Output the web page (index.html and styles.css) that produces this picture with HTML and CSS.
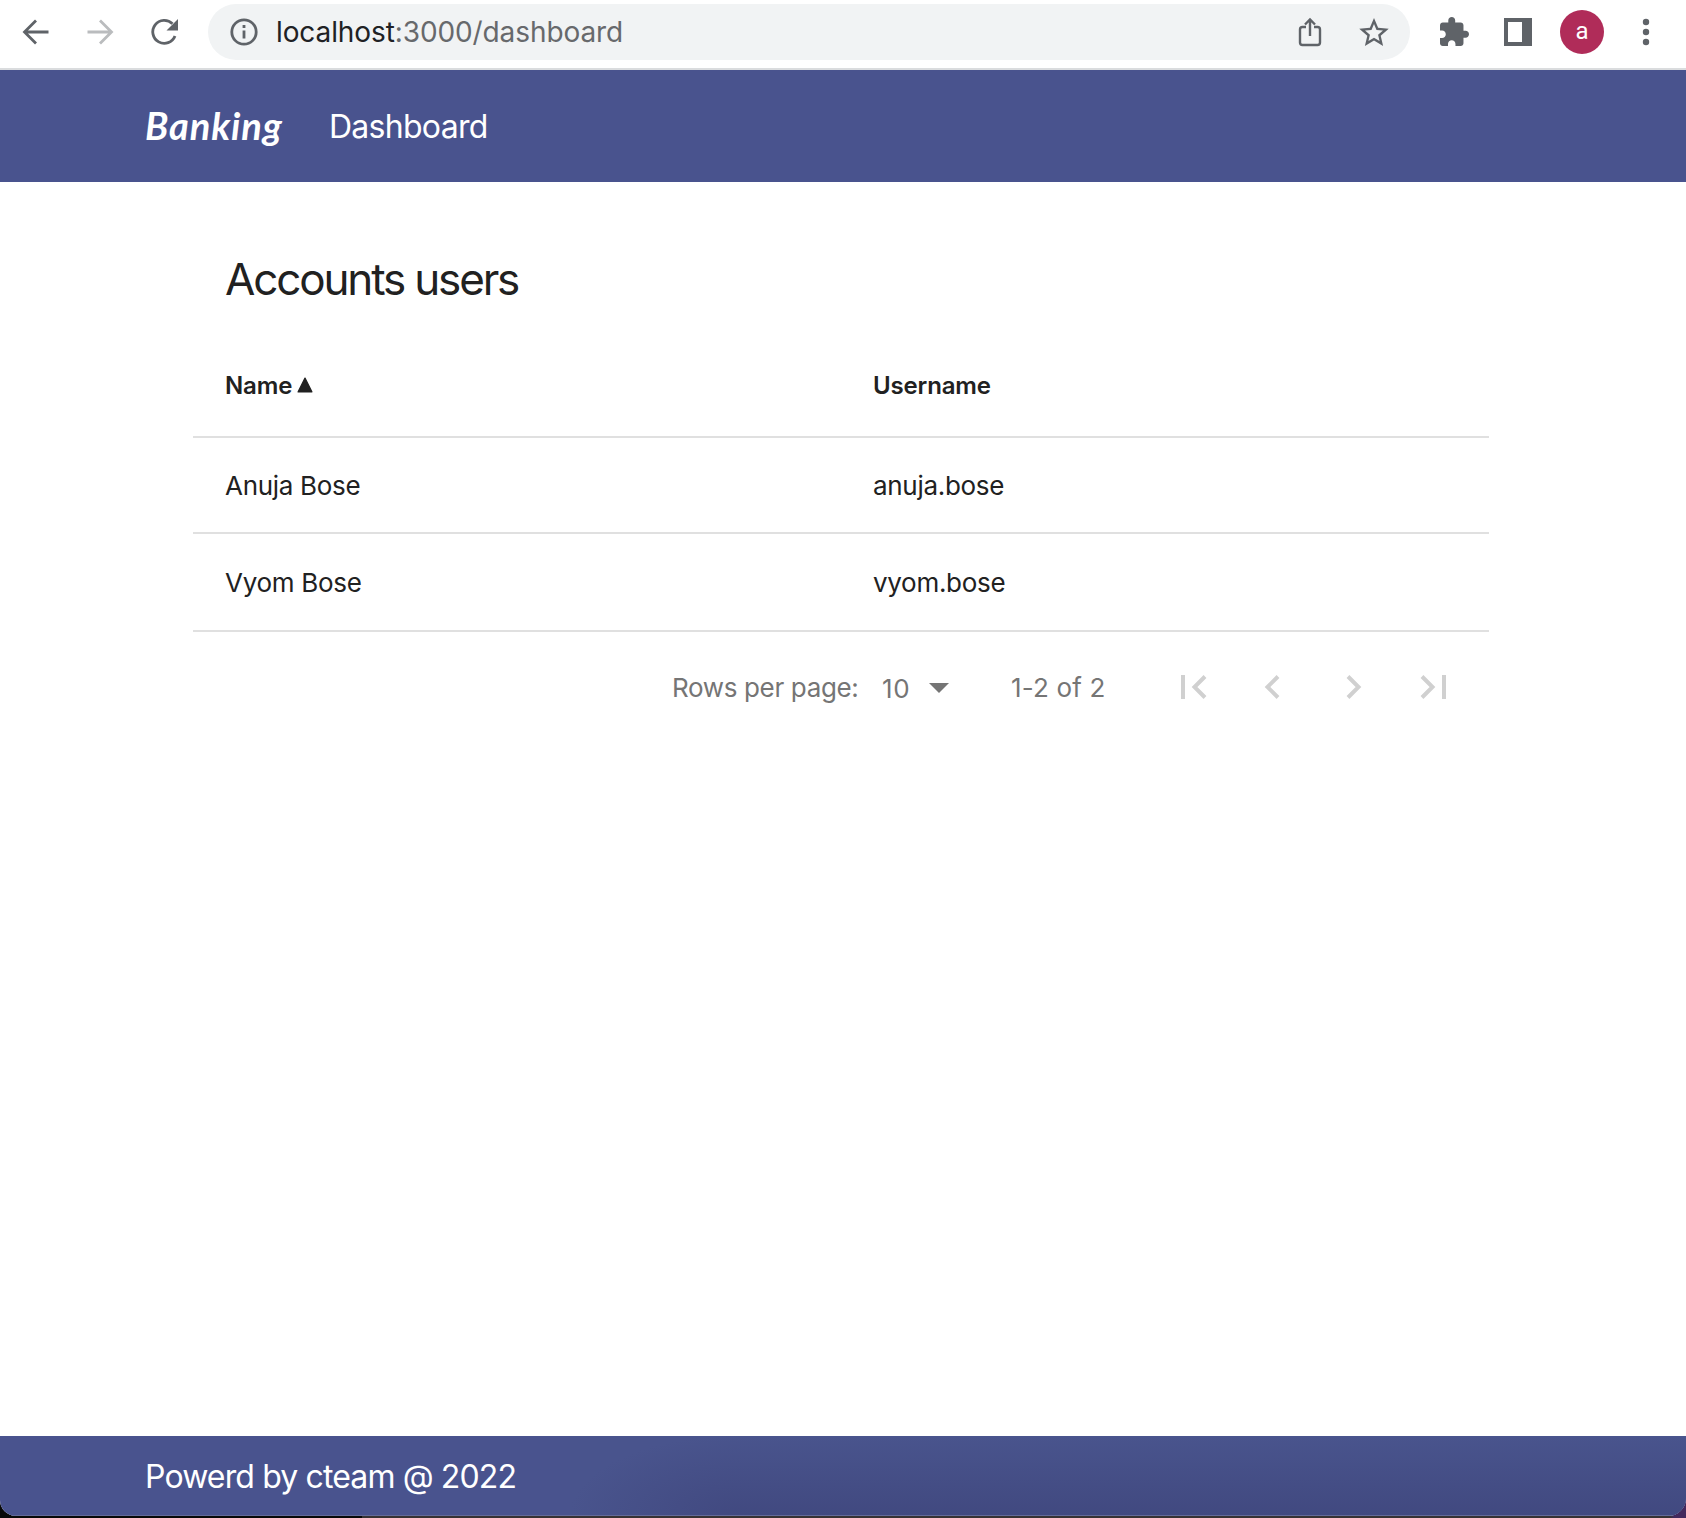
FILE: index.html
```html
<!DOCTYPE html>
<html lang="en">
<head>
<meta charset="utf-8">
<title>Banking</title>
<link rel="stylesheet" href="styles.css">
</head>
<body>
<div class="window">
  <div class="toolbar">
    <svg class="icon back" viewBox="0 0 28 28"><path d="M26.500 14H3M14 2.500 2.500 14 14 25.500" /></svg>
    <svg class="icon forward" viewBox="0 0 28 28"><path d="M1.500 14h23.500M14 2.500 25.500 14 14 25.500" /></svg>
    <svg class="icon reload" viewBox="0 0 28 28"><path d="M25 18A11.500 11.500 0 1 1 22.500 5.800"/><path class="solid" d="M28 1v11.500H16.500z"/></svg>
    <div class="omnibox">
      <svg class="icon info" viewBox="0 0 28 28"><circle cx="14" cy="14" r="12.200"/><path d="M14 12.500v8M14 7v3"/></svg>
      <div class="url"><span class="host">localhost</span>:3000/dashboard</div>
      <svg class="share" viewBox="0 0 24 30"><path d="M8 10H4.500A2.500 2.500 0 0 0 2 12.500v13A2.500 2.500 0 0 0 4.500 28h15a2.500 2.500 0 0 0 2.500-2.500v-13a2.500 2.500 0 0 0-2.500-2.500H16M12 19V3M7 7.500l5-5 5 5"/></svg>
      <svg class="star" viewBox="2 2 20 19"><path d="M22 9.240l-7.190-.62L12 2 9.190 8.630 2 9.240l5.460 4.730L5.820 21 12 17.270 18.180 21l-1.630-7.030L22 9.240zM12 15.400l-3.760 2.270 1-4.280-3.320-2.880 4.380-.38L12 6.100l1.710 4.040 4.380.38-3.320 2.880 1 4.280L12 15.400z"/></svg>
    </div>
    <svg class="puzzle" viewBox="2 1 21 21"><path d="M20.500 11H19V7c0-1.100-.9-2-2-2h-4V3.500C13 2.120 11.880 1 10.500 1S8 2.120 8 3.500V5H4c-1.100 0-1.990.9-1.990 2v3.800H3.500c1.490 0 2.700 1.210 2.700 2.700s-1.210 2.700-2.700 2.700H2V20c0 1.100.9 2 2 2h3.800v-1.500c0-1.490 1.210-2.700 2.700-2.700s2.700 1.210 2.700 2.700V22H17c1.100 0 2-.9 2-2v-4h1.500c1.380 0 2.500-1.120 2.500-2.500S21.880 11 20.500 11z"/></svg>
    <div class="panel-icon"></div>
    <div class="avatar">a</div>
    <svg class="menu" viewBox="0 0 8 28"><circle cx="4" cy="4" r="3.200"/><circle cx="4" cy="14" r="3.200"/><circle cx="4" cy="24" r="3.200"/></svg>
  </div>
  <nav class="navbar">
    <div class="brand">Banking</div>
    <div class="link">Dashboard</div>
  </nav>
  <main class="content">
    <h1 class="title">Accounts users</h1>
    <div class="table">
      <div class="row head">
        <div class="cell"><span>Name</span><svg class="sort" viewBox="0 0 16 16"><path d="M8 2.500 13.500 13.500h-11z"/></svg></div>
        <div class="cell"><span>Username</span></div>
      </div>
      <div class="row first"><div class="cell"><span>Anuja Bose</span></div><div class="cell"><span>anuja.bose</span></div></div>
      <div class="row second"><div class="cell"><span>Vyom Bose</span></div><div class="cell"><span>vyom.bose</span></div></div>
    </div>
    <div class="pager">
      <span class="label">Rows per page:</span>
      <span class="count">10</span>
      <svg class="caret" viewBox="0 0 20 10"><path d="M0 0h20L10 10z"/></svg>
      <span class="range">1-2 of 2</span>
      <svg class="page first-page" viewBox="0 0 26 24"><path d="M2 0v24M24 1.500 13.500 12 24 22.500"/></svg>
      <svg class="page prev-page" viewBox="0 0 16 24"><path d="M14 1.500 3.500 12 14 22.500"/></svg>
      <svg class="page next-page" viewBox="0 0 16 24"><path d="M2 1.500 12.500 12 2 22.500"/></svg>
      <svg class="page last-page" viewBox="0 0 26 24"><path d="M2 1.500 12.500 12 2 22.500M24 0v24"/></svg>
    </div>
  </main>
  <footer class="footer"><span class="credit">Powerd by cteam @ 2022</span></footer>
</div>
</body>
</html>
```
FILE: styles.css
```css
* { box-sizing: border-box; }
body {
  margin: 0;
  height: 1518px;
  overflow: hidden;
  background: linear-gradient(90deg, #080909 0 362px, #373234 362px 1670px, #43285d 1674px);
  font-family: Inter, "Liberation Sans", sans-serif;
  color: #212121;
}
.window {
  display: flex;
  flex-direction: column;
  height: 1516px;
  background: #fff;
  border-radius: 0 0 18px 16px;
  overflow: hidden;
}
svg { display: block; flex: none; }
span, .brand, .link, .url { white-space: nowrap; }

.toolbar {
  display: flex;
  align-items: center;
  height: 70px;
  padding: 0 36px 4px 22px;
  border-bottom: 2px solid #dadcde;
  flex: none;
}
.icon { width: 28px; height: 28px; fill: none; stroke: #5f6368; stroke-width: 2.8; }
.forward { margin-left: 36px; stroke: #babcbe; }
.reload { margin-left: 36px; }
.icon .solid { fill: #5f6368; stroke: none; }
.omnibox {
  display: flex;
  align-items: center;
  width: 1202px;
  height: 56px;
  margin-left: 30px;
  padding: 0 21px 0 22px;
  border-radius: 28px;
  background: #f1f3f4;
}
.url { margin-left: 18px; margin-right: auto; font-size: 28px; color: #67696c; letter-spacing: -0.1px; }
.host { color: #202124; }
.share { width: 24px; height: 30px; margin-right: 37px; fill: none; stroke: #5f6368; stroke-width: 2.4; }
.star { width: 30px; height: 28px; fill: #5f6368; }
.puzzle { width: 29px; height: 29px; margin: 0 0 2px 30px; fill: #5f6368; }
.panel-icon {
  width: 28px;
  height: 28px;
  margin-left: 35px;
  border: 4px solid #5f6368;
  border-right-width: 10px;
}
.avatar {
  width: 44px;
  height: 44px;
  margin-left: 28px;
  border-radius: 50%;
  background: #b02c59;
  color: #fff;
  font: 24px/42px Roboto, sans-serif;
  text-align: center;
}
.menu { width: 8px; height: 28px; margin-left: 38px; fill: #5f6368; }

.navbar {
  display: flex;
  align-items: center;
  height: 112px;
  flex: none;
  padding-left: 145px;
  background: #49538e;
  color: #fff;
}
.brand { width: 184px; padding-bottom: 2px; font: italic 700 38px/44px Lato, sans-serif; letter-spacing: 0.9px; }
.link { font-size: 32px; letter-spacing: -0.72px; }

.content { flex: 1; padding: 69px 197px 0 193px; }
.title { margin: 0; padding-left: 32px; font-size: 44px; line-height: 56px; font-weight: 400; letter-spacing: -2.15px; }
.table { margin-top: 31px; }
.row { display: grid; grid-template-columns: 648px 648px; border-bottom: 2px solid #e0e0e0; font-size: 26px; letter-spacing: -0.3px; }
.cell { display: flex; align-items: center; padding-left: 32px; }
.head { height: 100px; font-size: 24px; font-weight: 600; letter-spacing: -0.15px; }
.head .cell { padding-bottom: 4px; }
.first { height: 96px; }
.second { height: 98px; }
.sort { width: 20px; height: 20px; margin-left: 3px; fill: #212121; stroke: #212121; stroke-linejoin: round; }

.pager { display: flex; align-items: center; height: 110px; padding-left: 479px; color: #757575; font-size: 26px; }
.label { width: 210px; letter-spacing: -0.35px; }
.count { width: 47px; padding-top: 2px; letter-spacing: 0.6px; }
.caret { width: 20px; height: 10px; margin-top: 2px; fill: #757575; }
.range { width: 170px; margin-left: 62px; letter-spacing: 0.15px; }
.page { height: 24px; fill: none; stroke: #d0d0d0; stroke-width: 4; }
.first-page, .last-page { width: 26px; }
.prev-page, .next-page { width: 16px; }
.prev-page { margin-left: 57px; }
.next-page { margin-left: 66px; }
.last-page { margin-left: 58px; }

.footer {
  height: 80px;
  flex: none;
  padding: 2px 0 0 145px;
  display: flex;
  align-items: center;
  border-bottom: 1px solid #646b99;
  background: radial-gradient(ellipse 170px 80px at 170px 100%, #414980, #49548d) 570px 0 / 170px 100% no-repeat,
    linear-gradient(#49548d, #414980) 740px 0 / 946px 100% no-repeat, #49538e;
  color: #fff;
  font-size: 32px;
}
.credit { letter-spacing: -0.87px; }
```
